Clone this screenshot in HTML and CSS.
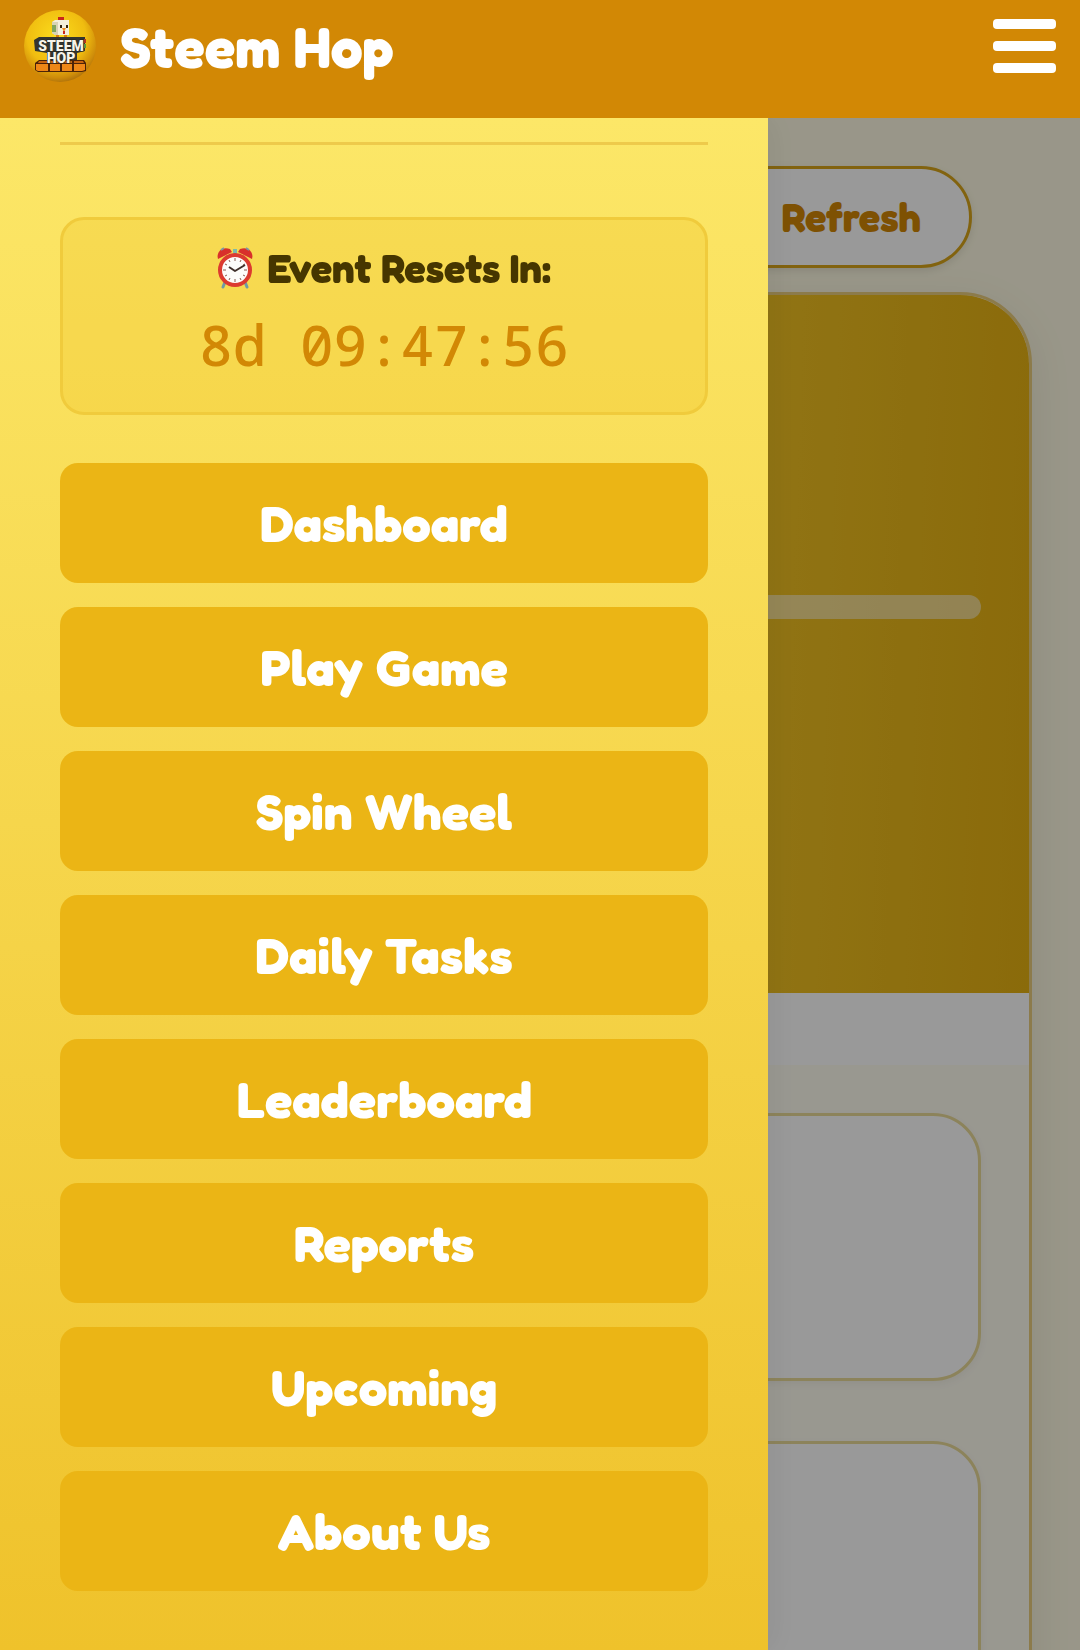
FILE: index.html
```
<!DOCTYPE html>
<html lang="en">
<head>
    <meta charset="UTF-8">
    <meta name="viewport" content="width=device-width, initial-scale=1.0">
    <title>Steem Hop</title>
    <link rel="stylesheet" href="styles.css">
</head>
<body>
    <header class="topbar">
        <a class="brand" href="#">
            <svg class="logo" viewBox="0 0 72 72" aria-hidden="true">
                <defs>
                    <radialGradient id="ball" cx="0.45" cy="0.36" r="0.68">
                        <stop offset="0" stop-color="#fbdc1c"/>
                        <stop offset="0.6" stop-color="#f0bd10"/>
                        <stop offset="0.85" stop-color="#cf8d0a"/>
                        <stop offset="1" stop-color="#a3680c"/>
                    </radialGradient>
                </defs>
                <circle cx="36" cy="36" r="36" fill="url(#ball)"/>
                <!-- chicken -->
                <path d="M34 7h6v4h-6z" fill="#c9281c"/>
                <path d="M28 12l3-2h14v15H31l-3-2z" fill="#f4efdc"/>
                <path d="M28 12h6v13h-3l-3-2z" fill="#d8d3b5"/>
                <path d="M28 15h4v7h-4z" fill="#83a65e"/>
                <path d="M36 15h2v3h-2zM42 15h2v3h-2z" fill="#33230f"/>
                <path d="M38 18h4l-2 4z" fill="#f08a1c"/>
                <path d="M39 21h2v3h-2z" fill="#c9281c"/>
                <path d="M32 25h3v4h-3zM40 25h3v4h-3z" fill="#d97a10"/>
                <!-- sign and bricks -->
                <path d="M10 30l5-3h46v14l-8 2v11H23V43l-12-2z" fill="#34362f"/>
                <path d="M60 29h2v4h-2z" fill="#b5341f"/>
                <path d="M60 34h2v4h-2z" fill="#5c9a3a"/>
                <path d="M11 53l4-3h45l2 3v8l-4 1H14l-3-2z" fill="#4c2308"/>
                <path d="M12 54h12v7H14l-2-1zM26 54h10v7H26zM38 54h10v7H38zM50 54h11v6l-3 1h-8z" fill="#ee8717"/>
                <path d="M15 51h9v2H14zM26 51h22v2H26zM50 51h9l1 2H50z" fill="#c76410"/>
                <text class="logo-text"><tspan x="37" y="41">STEEM</tspan><tspan x="37" y="53">HOP</tspan></text>
            </svg>
            <span class="brand-name">Steem Hop</span>
        </a>
        <button class="menu-toggle" type="button" aria-label="Toggle menu">
            <span></span>
            <span></span>
            <span></span>
        </button>
    </header>

    <main class="page">
        <div class="toolbar">
            <button class="refresh" type="button">
                <svg class="refresh-icon" viewBox="0 0 24 24" aria-hidden="true">
                    <path d="M20 12a8 8 0 1 1-3-6l3 3M20 4v5h-5" fill="none" stroke="currentColor" stroke-width="3"/>
                </svg>
                Refresh
            </button>
        </div>
        <section class="panel">
            <div class="panel-banner">
                <div class="progress"></div>
            </div>
            <div class="panel-body">
                <div class="card"></div>
                <div class="card"></div>
            </div>
        </section>
    </main>

    <div class="overlay"></div>

    <aside class="sidebar">
        <hr class="divider">
        <div class="event-timer">
            <div class="event-label">
                <svg class="clock" viewBox="0 0 36 42" aria-hidden="true">
                    <path d="M8 35l-2 5M28 35l2 5" stroke="#6f9aa5" stroke-width="3" stroke-linecap="round"/>
                    <path d="M16 2h4v6h-4z" fill="#7dbba9"/>
                    <path d="M1 12C-1 5 5-1 13 2l2 3z" fill="#d8302b"/>
                    <path d="M35 12c2-7-4-13-12-10l-2 3z" fill="#d8302b"/>
                    <path d="M4 3l3-2M32 3l-3-2" stroke="#7f98a5" stroke-width="2"/>
                    <circle cx="18" cy="23" r="15" fill="#fdfcfb" stroke="#dc3a30" stroke-width="4"/>
                    <path d="M18 11v3M18 32v3M6 23h3M27 23h3M12 13l1 2M24 13l-1 2M8 17l2 1M28 17l-2 1M8 29l2-1M28 29l-2-1M12 33l1-2M24 33l-1-2" stroke="#8a5d55" stroke-width="1"/>
                    <path d="M12 20l6 4 10-6" fill="none" stroke="#40302c" stroke-width="2" stroke-linejoin="round"/>
                </svg>
                <span>Event Resets In:</span>
            </div>
            <div class="event-count">8d 09:47:56</div>
        </div>
        <nav class="menu">
            <a href="#">Dashboard</a>
            <a href="#">Play Game</a>
            <a href="#">Spin Wheel</a>
            <a href="#">Daily Tasks</a>
            <a href="#">Leaderboard</a>
            <a href="#">Reports</a>
            <a href="#">Upcoming</a>
            <a href="#">About Us</a>
        </nav>
    </aside>
</body>
</html>
```
FILE: styles.css
```
:root {
    --header-height: 118px;
}
* {
    box-sizing: border-box;
    margin: 0;
    padding: 0;
}
body {
    background: #fffbe4;
    font-family: Fredoka, 'Inter', 'Open Sans', sans-serif;
    height: 100vh;
    overflow: hidden;
}
button {
    border: none;
    cursor: pointer;
    font-family: inherit;
}
a {
    color: inherit;
    text-decoration: none;
}

/* Header */
.topbar {
    align-items: flex-start;
    background: #d28805;
    display: flex;
    height: var(--header-height);
    justify-content: space-between;
    padding: 10px 24px;
    position: relative;
    z-index: 30;
}
.brand {
    align-items: center;
    color: #fff;
    display: flex;
    gap: 24px;
}
.logo {
    height: 72px;
    width: 72px;
}
.logo-text {
    fill: #f6f4ea;
    font-family: Roboto, sans-serif;
    font-size: 14px;
    font-weight: 900;
    paint-order: stroke;
    stroke: #26261f;
    stroke-width: 1px;
    text-anchor: middle;
}
.brand-name {
    font-size: 57px;
    font-weight: 700;
    line-height: 72px;
}
.menu-toggle {
    background: none;
    display: flex;
    flex-direction: column;
    gap: 12px;
    height: 72px;
    justify-content: center;
}
.menu-toggle span {
    background: #fff;
    border-radius: 4px;
    height: 10px;
    width: 63px;
}

/* Page behind the menu */
.page {
    padding: 48px;
}
.toolbar {
    display: flex;
    justify-content: flex-end;
    margin-bottom: 24px;
    padding: 0 60px;
}
.refresh {
    align-items: center;
    background: #fff;
    border: 3px solid #d9a51a;
    border-radius: 51px;
    box-shadow: 0 3px 9px rgba(0, 0, 0, 0.1);
    color: #d28805;
    display: flex;
    font-size: 40px;
    font-weight: 700;
    gap: 12px;
    height: 102px;
    padding: 0 48px;
}
.refresh-icon {
    height: 40px;
    width: 40px;
}
.panel {
    background: #fff;
    border: 3px solid #e9cd7e;
    border-radius: 72px;
    box-shadow: 0 12px 45px rgba(0, 0, 0, 0.08);
    overflow: hidden;
}
.panel-banner {
    background: linear-gradient(92deg, #f5d94a, #f0c020 75%, #e7b212);
    height: 698px;
    padding: 300px 48px 0;
}
.progress {
    background: rgba(255, 255, 255, 0.5);
    border-radius: 12px;
    height: 24px;
}
.panel-body {
    background: #fffdf1;
    border-top: 72px solid #fff;
    display: flex;
    flex-direction: column;
    gap: 60px;
    min-height: 900px;
    padding: 48px;
}
.card {
    background: #fff;
    border: 3px solid #eadb98;
    border-radius: 48px;
    box-shadow: 0 3px 9px rgba(0, 0, 0, 0.05);
    height: 268px;
}
.overlay {
    background: rgba(0, 0, 0, 0.4);
    inset: 0;
    position: fixed;
    z-index: 10;
}

/* Slide-in menu */
.sidebar {
    background: linear-gradient(#fce768, #efc22b);
    bottom: 0;
    box-shadow: 6px 0 30px rgba(0, 0, 0, 0.06);
    left: 0;
    max-width: 80%;
    overflow-y: auto;
    padding: 24px 60px 48px;
    position: fixed;
    top: var(--header-height);
    width: 768px;
    z-index: 20;
}
.divider {
    background: #eeca4b;
    border: none;
    height: 3px;
    margin-bottom: 72px;
}
.event-timer {
    background: rgba(234, 179, 8, 0.2);
    border: 3px solid #f0cb3c;
    border-radius: 24px;
    margin-bottom: 48px;
    padding: 21px 21px 27px;
    text-align: center;
}
.event-label {
    align-items: center;
    color: #463600;
    display: flex;
    font-size: 40px;
    font-weight: 700;
    gap: 14px;
    justify-content: center;
    line-height: 54px;
    margin-bottom: 9px;
}
.clock {
    height: 42px;
    width: 36px;
}
.event-count {
    color: #d28805;
    font-family: 'Droid Sans Mono', 'Noto Sans Mono', 'DejaVu Sans Mono', monospace;
    font-size: 56px;
    font-weight: 500;
    line-height: 81px;
    white-space: nowrap;
}
.menu {
    display: flex;
    flex-direction: column;
    gap: 24px;
}
.menu a {
    background: #ebb515;
    border-radius: 18px;
    color: #fff;
    font-size: 51px;
    font-weight: 700;
    line-height: 120px;
    text-align: center;
}
```
